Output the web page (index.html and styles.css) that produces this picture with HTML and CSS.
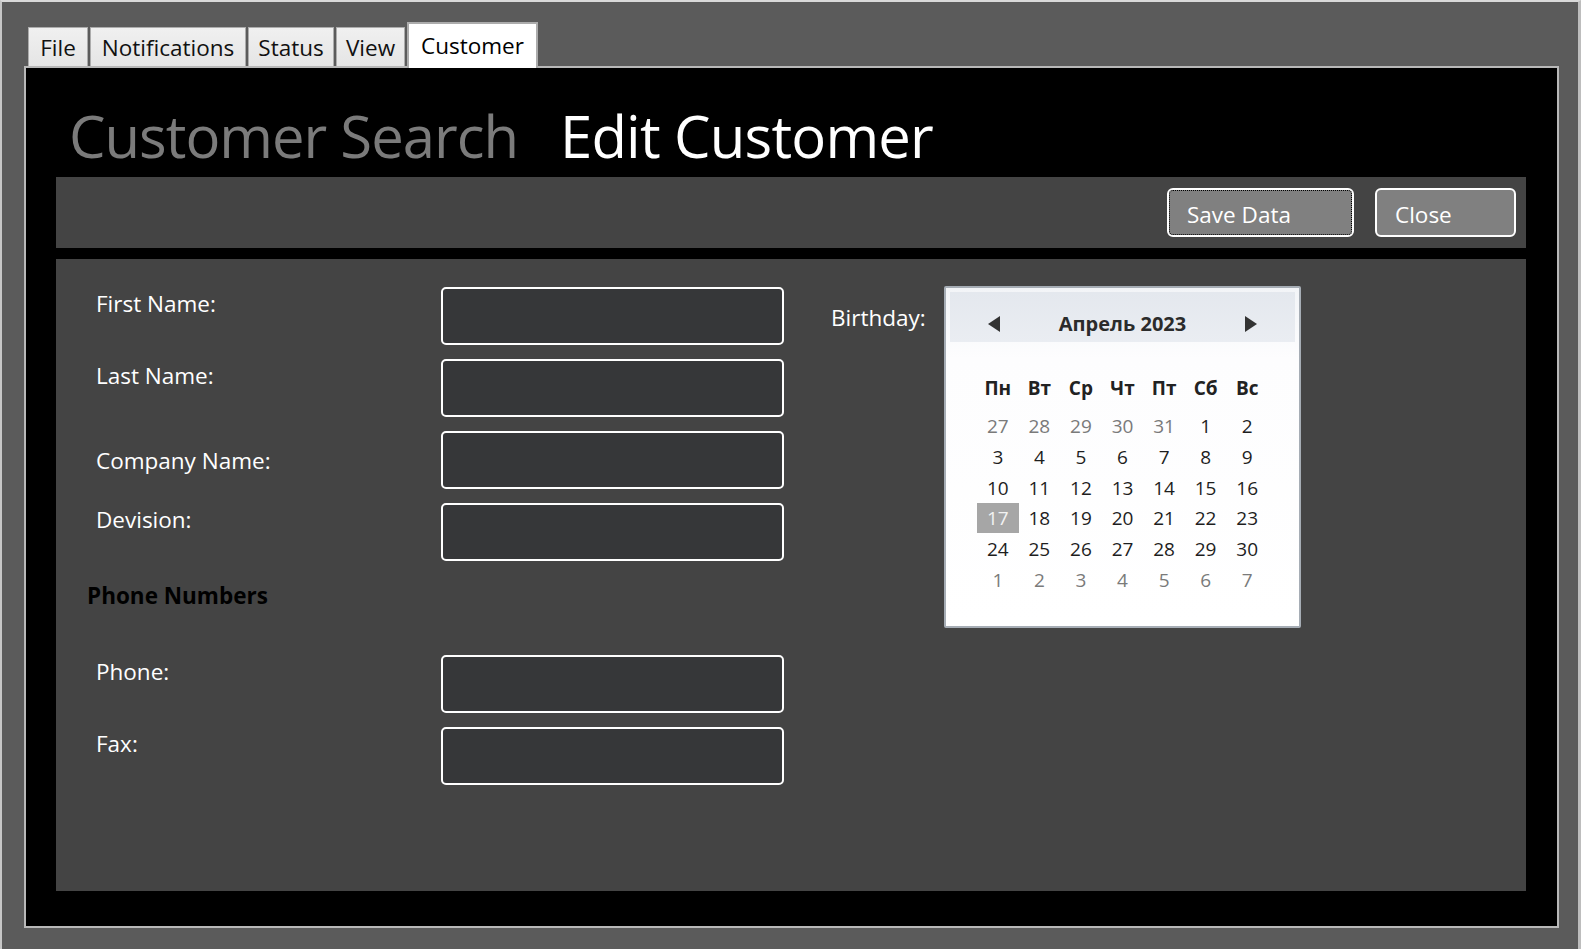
FILE: index.html
```html
<!DOCTYPE html>
<html lang="en">
<head>
<meta charset="utf-8">
<title>Edit Customer</title>
<link rel="stylesheet" href="styles.css">
</head>
<body>
<div class="window">
  <div class="tabs">
    <div class="tab tab-file">File</div>
    <div class="tab tab-notifications">Notifications</div>
    <div class="tab tab-status">Status</div>
    <div class="tab tab-view">View</div>
    <div class="tab tab-active">Customer</div>
  </div>
  <div class="panel">
    <div class="titles">
      <span class="title title-muted">Customer Search</span>
      <span class="title title-current">Edit Customer</span>
    </div>
    <div class="toolbar">
      <button class="btn btn-save">Save Data</button>
      <button class="btn btn-close">Close</button>
    </div>
    <div class="content">
      <div class="form">
        <div class="lbl">First Name:</div><input class="field" type="text">
        <div class="lbl">Last Name:</div><input class="field" type="text">
        <div class="lbl lbl-center">Company Name:</div><input class="field" type="text">
        <div class="lbl">Devision:</div><input class="field" type="text">
        <div class="section-head">Phone Numbers</div><div></div>
        <div class="lbl">Phone:</div><input class="field" type="text">
        <div class="lbl">Fax:</div><input class="field" type="text">
      </div>
      <div class="birthday">
        <div class="bday-label">Birthday:</div>
        <div class="calendar">
          <div class="cal-head">
            <svg class="cal-arrow" width="12" height="16" viewBox="0 0 12 16"><polygon points="12,0 12,16 0,8" fill="#333"/></svg>
            <span class="cal-month">Апрель 2023</span>
            <svg class="cal-arrow" width="12" height="16" viewBox="0 0 12 16"><polygon points="0,0 0,16 12,8" fill="#333"/></svg>
          </div>
          <div class="cal-dow">
            <span>Пн</span><span>Вт</span><span>Ср</span><span>Чт</span><span>Пт</span><span>Сб</span><span>Вс</span>
          </div>
          <div class="cal-days">
            <span class="muted">27</span><span class="muted">28</span><span class="muted">29</span><span class="muted">30</span><span class="muted">31</span><span>1</span><span>2</span>
            <span>3</span><span>4</span><span>5</span><span>6</span><span>7</span><span>8</span><span>9</span>
            <span>10</span><span>11</span><span>12</span><span>13</span><span>14</span><span>15</span><span>16</span>
            <span class="selected">17</span><span>18</span><span>19</span><span>20</span><span>21</span><span>22</span><span>23</span>
            <span>24</span><span>25</span><span>26</span><span>27</span><span>28</span><span>29</span><span>30</span>
            <span class="muted">1</span><span class="muted">2</span><span class="muted">3</span><span class="muted">4</span><span class="muted">5</span><span class="muted">6</span><span class="muted">7</span>
          </div>
        </div>
      </div>
    </div>
  </div>
</div>
</body>
</html>
```

FILE: styles.css
```css
* { box-sizing: border-box; }

html, body {
  margin: 0;
  padding: 0;
  background: #5b5b5b;
}

body {
  font-family: "Open Sans", "Noto Sans", "Liberation Sans", sans-serif;
  overflow: hidden;
}

.window {
  width: 1581px;
  height: 949px;
  background: #5b5b5b;
  border-top: 2px solid #d9d9d9;
  border-left: 2px solid #c6c6c6;
  border-right: 3px solid #bdbdbd;
  padding: 20px 19px 0 22px;
}

/* ---------- tabs ---------- */
.tabs {
  position: relative;
  z-index: 1;
  display: flex;
  align-items: flex-end;
  gap: 2px;
  height: 46px;
  margin-left: 4px;
}

.tab {
  height: 39px;
  margin-bottom: 2px;
  padding: 5px 0 0;
  border: 1px solid #acacac;
  border-bottom: 0;
  background: linear-gradient(#f0f0f0, #e5e5e5);
  color: #111;
  font-size: 22.5px;
  line-height: 30px;
  text-align: center;
  white-space: nowrap;
}

.tab-file { width: 60px; }
.tab-notifications { width: 156px; }
.tab-status { width: 86px; }
.tab-view { width: 69px; }

.tab-active {
  width: 131px;
  height: 46px;
  margin-bottom: 0;
  padding: 7px 0 0;
  border: 2px solid #acacac;
  border-bottom: 0;
  background: #ffffff;
  color: #000;
}

/* ---------- main black panel ---------- */
.panel {
  width: 1535px;
  height: 862px;
  margin-top: -2px;
  background: #000;
  border: 2px solid #b8b8b8;
  padding: 0 31px 0 30px;
}

.titles {
  height: 109px;
  padding: 39px 0 0 13px;
  display: flex;
  white-space: nowrap;
}

.title {
  font-size: 58px;
  line-height: 58px;
  letter-spacing: -1px;
}

.title-muted { color: #7b7b7b; }

.title-current {
  color: #ffffff;
  margin-left: 42px;
  letter-spacing: -0.8px;
}

.toolbar {
  height: 71px;
  background: #444444;
  display: flex;
  justify-content: flex-end;
  align-items: center;
  gap: 21px;
  padding-right: 10px;
}

.btn {
  height: 49px;
  background: #808080;
  border: 2px solid #ffffff;
  border-radius: 6px;
  color: #ffffff;
  font-family: "Open Sans", "Noto Sans", sans-serif;
  font-size: 22.5px;
  line-height: 30px;
  text-align: left;
  padding: 4px 0 0 18px;
}

.btn-save {
  width: 187px;
  outline: 1px dotted #000;
  outline-offset: -3px;
}

.btn-close { width: 141px; }

/* ---------- content ---------- */
.content {
  height: 632px;
  margin-top: 11px;
  background: #444444;
  display: flex;
  align-items: flex-start;
  padding: 28px 0 0 40px;
}

.form {
  display: grid;
  grid-template-columns: 345px 343px;
  grid-template-rows: 58px 58px 58px 58px 66px 58px 58px;
  row-gap: 14px;
}

.lbl {
  align-self: start;
  margin-top: 2px;
  color: #ffffff;
  font-size: 22.5px;
  line-height: 30px;
}

.lbl-center {
  align-self: center;
  margin-top: 2px;
}

.section-head {
  align-self: start;
  margin: 6px 0 0 -9px;
  color: #000;
  font-size: 22.5px;
  font-weight: 700;
  line-height: 30px;
  white-space: nowrap;
}

.field {
  display: block;
  width: 343px;
  height: 58px;
  margin: 0;
  background: #363739;
  border: 2px solid #ffffff;
  border-radius: 5px;
  outline: none;
  -webkit-appearance: none;
  appearance: none;
}

/* ---------- birthday / calendar ---------- */
.birthday {
  display: flex;
  align-items: flex-start;
  margin-left: 47px;
}

.bday-label {
  width: 113px;
  margin-top: 16px;
  color: #ffffff;
  font-size: 22.5px;
  line-height: 30px;
}

.calendar {
  width: 357px;
  height: 342px;
  margin-top: -1px;
  padding: 4px;
  border: 2px solid #a6adb5;
  border-radius: 2px;
  background: linear-gradient(#f2f4f7, #fdfdfe 70px, #ffffff);
}

.cal-head {
  height: 50px;
  display: flex;
  align-items: center;
  justify-content: space-between;
  padding: 14px 38px 0;
  background: linear-gradient(#e4e8ee, #eaedf2);
}

.cal-arrow { display: block; }

.cal-month {
  color: #2b2b2b;
  font-size: 20px;
  font-weight: 700;
  line-height: 30px;
}

.cal-dow,
.cal-days {
  display: grid;
  grid-template-columns: repeat(7, 41.57px);
  grid-auto-rows: 30.7px;
  justify-content: center;
  text-align: center;
  line-height: 30.7px;
}

.cal-dow {
  margin-top: 30.6px;
  margin-bottom: 8px;
  color: #222;
  font-size: 19px;
  font-weight: 700;
}

.cal-days {
  color: #1e1e1e;
  font-size: 19px;
}

.cal-days .muted { color: #7a7a7a; }

.cal-days .selected {
  background: #a6a6a6;
  color: #f2f2f2;
  height: 30px;
}
```
